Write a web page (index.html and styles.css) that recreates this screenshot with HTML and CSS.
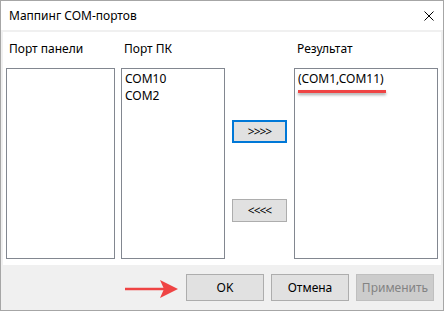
FILE: index.html
```html
<!DOCTYPE html>
<html lang="ru">
<head>
    <meta charset="UTF-8">
    <meta name="viewport" content="width=device-width, initial-scale=1.0">
    <title>Маппинг COM-портов</title>
    <link rel="stylesheet" href="styles.css">
</head>
<body>
    <div class="window">
        <div class="titlebar">
            <span class="title">Маппинг COM-портов</span>
            <svg class="close" width="10" height="10" viewBox="0 0 10 10">
                <path d="M0.5 0.5 L9.5 9.5 M9.5 0.5 L0.5 9.5" stroke="#000" stroke-width="1" fill="none"/>
            </svg>
        </div>
        <div class="client">
            <div class="panel">
                <div class="col col-panel">
                    <div class="label">Порт панели</div>
                    <div class="list"></div>
                </div>
                <div class="col col-pc">
                    <div class="label">Порт ПК</div>
                    <div class="list">
                        <div class="item">COM10</div>
                        <div class="item">COM2</div>
                    </div>
                </div>
                <div class="col col-mid">
                    <button class="btn btn-move btn-focus">&gt;&gt;&gt;&gt;</button>
                    <button class="btn btn-move btn-back">&lt;&lt;&lt;&lt;</button>
                </div>
                <div class="col col-res">
                    <div class="label">Результат</div>
                    <div class="list">
                        <div class="item"><span class="marked">(COM1,COM11)</span></div>
                    </div>
                </div>
            </div>
            <div class="footer">
                <svg class="arrow" width="56" height="20" viewBox="0 0 56 20">
                    <path d="M0 10 L40 10" stroke="#ef4444" stroke-width="2.5"/>
                    <path d="M53 10 L35 1 L39 10 L35 19 Z" fill="#ef4444"/>
                </svg>
                <button class="btn btn-dlg">OK</button>
                <button class="btn btn-dlg">Отмена</button>
                <button class="btn btn-dlg" disabled>Применить</button>
            </div>
        </div>
    </div>
</body>
</html>
```

FILE: styles.css
```css
body {
    margin: 0;
    background-color: #fff;
    font-family: "Noto Sans", "Open Sans", sans-serif;
    font-size: 12px;
    color: #000;
}
.window {
    width: 444px;
    height: 311px;
    box-sizing: border-box;
    border: 1px solid #a6a6a6;
    display: flex;
    flex-direction: column;
}
.titlebar {
    height: 29px;
    background-color: #fff;
    display: flex;
    align-items: center;
    justify-content: space-between;
    padding: 0 9px 0 8px;
}
.title {
    line-height: 16px;
}
.close {
    display: block;
}
.client {
    flex: 1;
    background-color: #f0f0f0;
    padding: 2px 2px 0 2px;
    display: flex;
    flex-direction: column;
}
.panel {
    height: 233px;
    background-color: #fff;
    display: flex;
    padding: 9px 3px 0 3px;
    box-sizing: border-box;
}
.col {
    display: flex;
    flex-direction: column;
}
.label {
    height: 16px;
    line-height: 16px;
    margin-bottom: 11px;
    padding-left: 3px;
}
.list {
    height: 191px;
    box-sizing: border-box;
    border: 1px solid #828790;
    background-color: #fff;
    padding: 1px 3px 0 3px;
}
.item {
    line-height: 17px;
    white-space: nowrap;
}
.col-panel .list {
    width: 109px;
}
.col-pc {
    margin-left: 6px;
}
.col-pc .list {
    width: 104px;
}
.col-mid {
    width: 69px;
    padding: 79px 0 0 7px;
    box-sizing: border-box;
}
.col-res .list {
    width: 144px;
}
.marked {
    position: relative;
}
.marked::after {
    content: "";
    position: absolute;
    left: 0;
    right: -2px;
    top: 20px;
    height: 3px;
    background-color: #ef4444;
    box-shadow: 0 2px 3px rgba(0, 0, 0, 0.35);
}
.btn {
    font-family: inherit;
    font-size: 12px;
    color: #000;
    background-color: #e1e1e1;
    border: 1px solid #adadad;
    padding: 0;
    box-sizing: border-box;
}
.btn-move {
    width: 55px;
    height: 23px;
    font-size: 12px;
    letter-spacing: -1px;
}
.btn-focus {
    border: 2px solid #0078d7;
}
.btn-back {
    margin-top: 56px;
}
.footer {
    position: relative;
    flex: 1;
    display: flex;
    justify-content: flex-end;
    align-items: flex-start;
    gap: 7px;
    padding: 9px 7px 0 0;
}
.btn-dlg {
    width: 78px;
    height: 27px;
}
.btn-dlg:disabled {
    background-color: #cccccc;
    border-color: #bfbfbf;
    color: #838383;
}
.arrow {
    position: absolute;
    left: 122px;
    top: 14px;
}
```
